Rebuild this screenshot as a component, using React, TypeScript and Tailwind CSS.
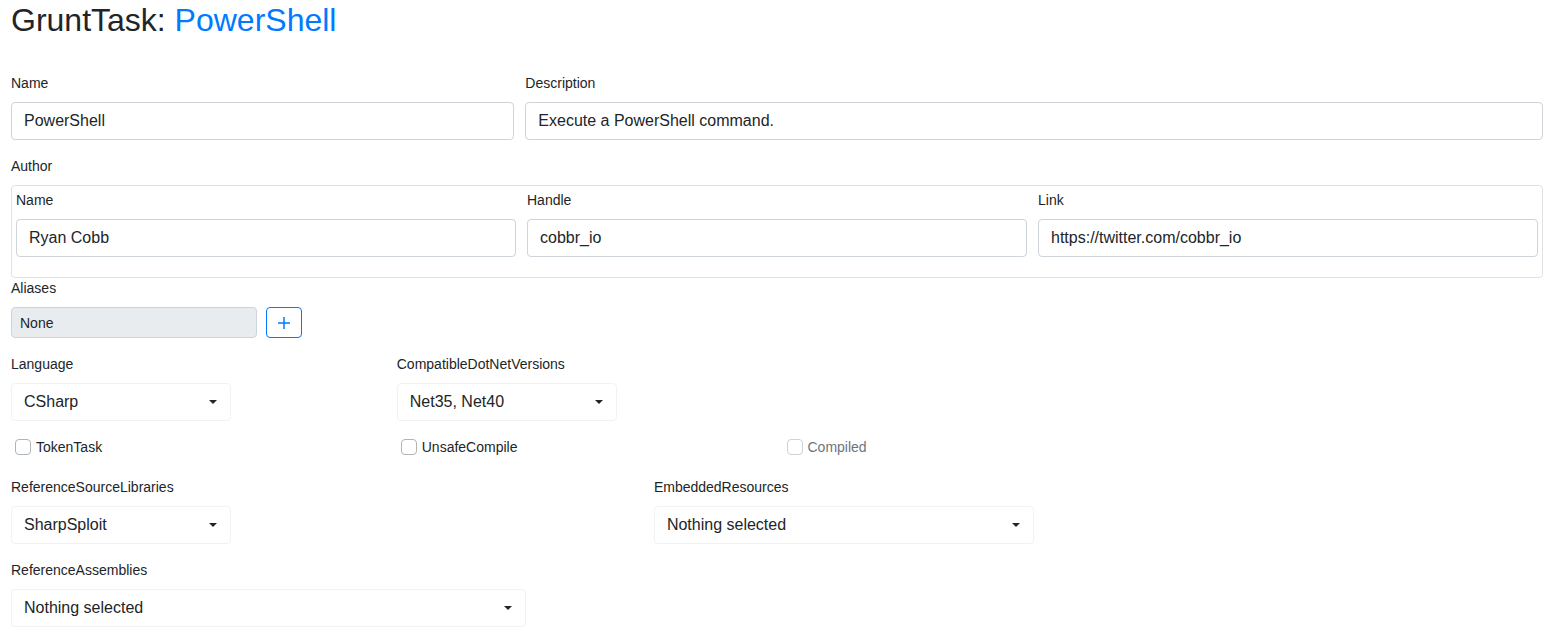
import React from "react";

const inputCls =
  "block w-full h-[38px] px-3 border border-[#ced4da] rounded-[4px] bg-white text-base text-[#212529] leading-6 outline-none";

function Label({ children }: { children: React.ReactNode }) {
  return <label className="block text-sm leading-[21px] text-[#212529] mb-2">{children}</label>;
}

function TextField({ label, value }: { label: string; value: string }) {
  return (
    <div className="mb-4">
      <Label>{label}</Label>
      <input className={inputCls} defaultValue={value} />
    </div>
  );
}

function Select({ value, width }: { value: string; width: string }) {
  return (
    <button
      type="button"
      className={`flex items-center justify-between h-[38px] pl-3 pr-[13px] border border-[#f2f2f2] rounded-[4px] bg-white text-base text-[#212529] ${width}`}
    >
      <span>{value}</span>
      <span className="w-0 h-0 border-t-[4px] border-t-[#212529] border-x-[4px] border-x-transparent" />
    </button>
  );
}

function Check({ label, disabled }: { label: string; disabled?: boolean }) {
  return (
    <div className="flex items-center h-5 pl-1 mb-5">
      <span
        className={`w-4 h-4 rounded-[4px] border bg-white ${disabled ? "border-[#cfd3d7]" : "border-[#adb5bd]"}`}
      />
      <span className={`ml-[5px] text-sm ${disabled ? "text-[#6c757d]" : "text-[#212529]"}`}>{label}</span>
    </div>
  );
}

export default function App() {
  return (
    <div
      className="min-h-screen bg-white pt-px pl-[11px] pr-[4px] text-[#212529]"
      style={{ fontFamily: '"Liberation Sans", Arial, sans-serif' }}
    >
      <h2 className="text-[32px] leading-[38px] font-normal mb-[34px]">
        GruntTask: <span className="text-[#007bff]">PowerShell</span>
      </h2>

      {/* Name / Description */}
      <div className="grid grid-cols-3 gap-x-[11px]">
        <TextField label="Name" value="PowerShell" />
        <div className="col-span-2">
          <TextField label="Description" value="Execute a PowerShell command." />
        </div>
      </div>

      {/* Author */}
      <Label>Author</Label>
      <div className="border border-[#dee2e6] rounded-[4px] p-1">
        <div className="grid grid-cols-3 gap-x-[11px]">
          <TextField label="Name" value="Ryan Cobb" />
          <TextField label="Handle" value="cobbr_io" />
          <TextField label="Link" value="https://twitter.com/cobbr_io" />
        </div>
      </div>

      {/* Aliases */}
      <div className="mb-4">
        <Label>Aliases</Label>
        <div className="flex items-center gap-[9px]">
          <input
            className="w-[246px] h-[31px] px-2 border border-[#ced4da] rounded-[4px] bg-[#e9ecef] text-sm text-[#212529] outline-none"
            defaultValue="None"
            readOnly
          />
          <button
            type="button"
            className="flex items-center justify-center w-9 h-[31px] border border-[#007bff] rounded-[4px] bg-white"
          >
            <svg width="14" height="14" viewBox="0 0 14 14" fill="none" stroke="#007bff" strokeWidth="1.5">
              <path d="M7 1v12M1 7h12" />
            </svg>
          </button>
        </div>
      </div>

      {/* Language / DotNet versions */}
      <div className="grid grid-cols-4 gap-x-[11px]">
        <div className="mb-4">
          <Label>Language</Label>
          <Select value="CSharp" width="w-[220px]" />
        </div>
        <div className="mb-4">
          <Label>CompatibleDotNetVersions</Label>
          <Select value="Net35, Net40" width="w-[220px]" />
        </div>
      </div>

      {/* Flags */}
      <div className="grid grid-cols-4 gap-x-[11px]">
        <Check label="TokenTask" />
        <Check label="UnsafeCompile" />
        <Check label="Compiled" disabled />
      </div>

      {/* References */}
      <div className="grid grid-cols-12 gap-x-[11px]">
        <div className="col-span-5 mb-4">
          <Label>ReferenceSourceLibraries</Label>
          <Select value="SharpSploit" width="w-[220px]" />
        </div>
        <div className="col-span-5 mb-4">
          <Label>EmbeddedResources</Label>
          <Select value="Nothing selected" width="w-[380px]" />
        </div>
      </div>

      <div className="mb-4">
        <Label>ReferenceAssemblies</Label>
        <Select value="Nothing selected" width="w-[515px]" />
      </div>
    </div>
  );
}
